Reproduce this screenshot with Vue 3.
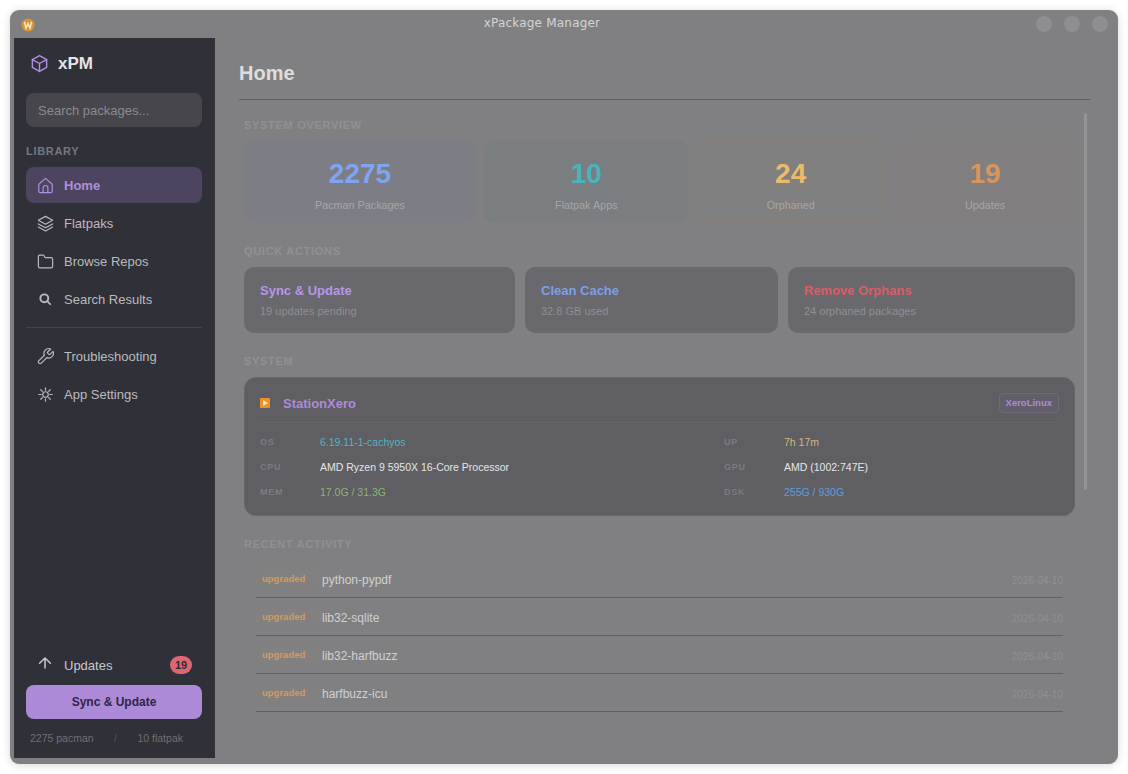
<script setup>
const navTop = [
  { label: 'Home', icon: 'home', active: true },
  { label: 'Flatpaks', icon: 'layers' },
  { label: 'Browse Repos', icon: 'folder' },
  { label: 'Search Results', icon: 'search' },
]
const navBottom = [
  { label: 'Troubleshooting', icon: 'wrench' },
  { label: 'App Settings', icon: 'sun' },
]
const stats = [
  { value: '2275', label: 'Pacman Packages', cls: 'blue', w: 232 },
  { value: '10', label: 'Flatpak Apps', cls: 'teal', w: 204 },
  { value: '24', label: 'Orphaned', cls: 'yellow', w: 188 },
  { value: '19', label: 'Updates', cls: 'orange', w: 184 },
]
const actions = [
  { title: 'Sync & Update', sub: '19 updates pending', cls: 'purple', w: 271 },
  { title: 'Clean Cache', sub: '32.8 GB used', cls: 'blue', w: 253 },
  { title: 'Remove Orphans', sub: '24 orphaned packages', cls: 'red', w: 287 },
]
const specs = [
  { key: 'OS', value: '6.19.11-1-cachyos', cls: 'v-teal' },
  { key: 'UP', value: '7h 17m', cls: 'v-yellow' },
  { key: 'CPU', value: 'AMD Ryzen 9 5950X 16-Core Processor', cls: '' },
  { key: 'GPU', value: 'AMD (1002:747E)', cls: '' },
  { key: 'MEM', value: '17.0G / 31.3G', cls: 'v-green' },
  { key: 'DSK', value: '255G / 930G', cls: 'v-blue' },
]
const activity = ['python-pypdf', 'lib32-sqlite', 'lib32-harfbuzz', 'harfbuzz-icu']
</script>

<template>
  <div class="page">
    <div class="window">
      <header class="titlebar">
        <svg class="wm-logo" width="14" height="14" viewBox="0 0 14 14">
          <circle cx="7" cy="7" r="6.5" fill="#d9962f" />
          <path d="M3.4 3.8 5 10.2 7 5.6 9 10.2 10.6 3.8" fill="none" stroke="#f6e8cc" stroke-width="1.5" />
        </svg>
        <span class="wm-title">xPackage Manager</span>
        <div class="wm-buttons">
          <i></i><i></i><i></i>
        </div>
      </header>

      <div class="body">
        <aside class="sidebar">
          <div class="brand">
            <svg width="19" height="19" viewBox="0 0 24 24" fill="none" stroke="#b08fdc" stroke-width="1.8" stroke-linejoin="round" stroke-linecap="round">
              <path d="M12 2 21 7v10l-9 5-9-5V7z" />
              <path d="M3 7l9 5 9-5M12 12v10" />
            </svg>
            <span>xPM</span>
          </div>
          <div class="search">Search packages...</div>
          <div class="side-label">LIBRARY</div>

          <nav class="nav">
            <a v-for="item in navTop" :key="item.label" class="nav-item" :class="{ active: item.active }">
              <span class="nav-icon">
                <svg width="19" height="19" viewBox="0 0 24 24" fill="none" stroke="currentColor" stroke-width="1.5" stroke-linejoin="round" stroke-linecap="round">
                  <template v-if="item.icon === 'home'">
                    <path d="M3.5 10.5 12 3l8.5 7.5V19a2 2 0 0 1-2 2h-13a2 2 0 0 1-2-2z" />
                    <path d="M9 21v-6a3 3 0 0 1 6 0v6" />
                  </template>
                  <template v-else-if="item.icon === 'layers'">
                    <path d="M12 3 21 8l-9 5-9-5z" />
                    <path d="M3 12.5 12 17.5l9-5" />
                    <path d="M3 16.5 12 21.5l9-5" />
                  </template>
                  <path v-else-if="item.icon === 'folder'" d="M3 6a2 2 0 0 1 2-2h4.5l2 3H19a2 2 0 0 1 2 2v9a2 2 0 0 1-2 2H5a2 2 0 0 1-2-2z" />
                  <template v-else>
                    <circle cx="10.5" cy="10.5" r="5" stroke-width="2.4" />
                    <path d="M14.5 14.5 18 18" stroke-width="2.2" />
                  </template>
                </svg>
              </span>
              {{ item.label }}
            </a>
          </nav>

          <div class="side-sep"></div>

          <nav class="nav">
            <a v-for="item in navBottom" :key="item.label" class="nav-item">
              <span class="nav-icon">
                <svg width="19" height="19" viewBox="0 0 24 24" fill="none" stroke="currentColor" stroke-width="1.5" stroke-linejoin="round" stroke-linecap="round">
                  <path v-if="item.icon === 'wrench'" d="M14.7 6.3a1 1 0 0 0 0 1.4l1.6 1.6a1 1 0 0 0 1.4 0l3.8-3.8a6 6 0 0 1-7.9 7.9l-6.9 6.9a2.1 2.1 0 0 1-3-3l6.9-6.9a6 6 0 0 1 7.9-7.9z" />
                  <template v-else>
                    <circle cx="12" cy="12" r="3.5" />
                    <path d="M12 3.5v3M12 17.5v3M3.5 12h3M17.5 12h3M6 6l2 2M16 16l2 2M6 18l2-2M16 8l2-2" />
                  </template>
                </svg>
              </span>
              {{ item.label }}
            </a>
          </nav>

          <div class="side-foot">
            <a class="nav-item updates">
              <span class="nav-icon">
                <svg width="20" height="20" viewBox="0 0 24 24" fill="none" stroke="currentColor" stroke-width="1.8" stroke-linecap="round" stroke-linejoin="round">
                  <path d="M12 15.6V3.6M5.5 10 12 3.6l6.5 6.4" />
                </svg>
              </span>
              Updates
              <span class="badge">19</span>
            </a>
            <button class="sync">Sync &amp; Update</button>
            <div class="counts">
              <span>2275 pacman</span>
              <span class="slash">/</span>
              <span>10 flatpak</span>
            </div>
          </div>
        </aside>

        <main class="main">
          <h1 class="page-title">Home</h1>
          <div class="content">
            <div class="scrollbar"></div>

            <h2 class="section first">SYSTEM OVERVIEW</h2>
            <div class="stats">
              <div v-for="s in stats" :key="s.label" class="stat" :class="'stat-' + s.cls" :style="{ width: s.w + 'px' }">
                <div class="stat-value">{{ s.value }}</div>
                <div class="stat-label">{{ s.label }}</div>
              </div>
            </div>

            <h2 class="section">QUICK ACTIONS</h2>
            <div class="actions">
              <div v-for="a in actions" :key="a.title" class="action" :style="{ width: a.w + 'px' }">
                <div class="action-title" :class="'t-' + a.cls">{{ a.title }}</div>
                <div class="action-sub">{{ a.sub }}</div>
              </div>
            </div>

            <h2 class="section">SYSTEM</h2>
            <section class="system">
              <div class="system-head">
                <span class="emoji"><b></b></span>
                <span class="host">StationXero</span>
                <span class="distro">XeroLinux</span>
              </div>
              <div class="specs">
                <div v-for="s in specs" :key="s.key" class="spec">
                  <span class="spec-key">{{ s.key }}</span>
                  <span class="spec-val" :class="s.cls">{{ s.value }}</span>
                </div>
              </div>
            </section>

            <h2 class="section recent">RECENT ACTIVITY</h2>
            <div class="activity">
              <div v-for="name in activity" :key="name" class="row">
                <span class="tag">upgraded</span>
                <span class="pkg">{{ name }}</span>
                <span class="date">2026-04-10</span>
              </div>
            </div>
          </div>
        </main>
      </div>
    </div>
  </div>
</template>

<style>
html, body { margin: 0; background: #fff; }
</style>

<style scoped>
.page {
  width: 1128px;
  height: 774px;
  padding: 10px;
  box-sizing: border-box;
  font-family: "Liberation Sans", Arial, sans-serif;
  overflow: hidden;
}
.window {
  width: 1108px;
  height: 754px;
  background: #808082;
  border-radius: 9px;
  box-shadow: 0 1px 8px rgba(0, 0, 0, 0.16);
  padding: 0 4px 6px;
  box-sizing: border-box;
  display: flex;
  flex-direction: column;
}

.titlebar {
  height: 28px;
  flex: none;
  position: relative;
  display: flex;
  align-items: center;
}
.wm-logo { margin: 1px 0 0 7px; }
.wm-title {
  position: absolute;
  left: 0;
  right: 0;
  top: 6px;
  text-align: center;
  font: 12px "DejaVu Sans", sans-serif;
  letter-spacing: 0.2px;
  color: #d4d4d6;
  padding-right: 44px;
}
.wm-buttons {
  margin-left: auto;
  margin-right: 6px;
  display: flex;
  gap: 12px;
}
.wm-buttons i {
  width: 16px;
  height: 16px;
  border-radius: 50%;
  background: #8f8f93;
}

.body { flex: 1; display: flex; min-height: 0; }

.sidebar {
  width: 201px;
  flex: none;
  background: #303039;
  padding: 0 13px 0 12px;
  box-sizing: border-box;
  display: flex;
  flex-direction: column;
}
.brand {
  height: 49px;
  margin-top: 1px;
  padding-left: 4px;
  display: flex;
  align-items: center;
  gap: 9px;
  font-size: 17px;
  font-weight: 700;
  color: #e4e4e6;
}
.search {
  height: 34px;
  margin-top: 5px;
  border-radius: 8px;
  background: #46464c;
  color: #8b8b90;
  font-size: 13px;
  line-height: 35px;
  padding-left: 12px;
}
.side-label {
  margin-top: 18px;
  font-size: 11px;
  font-weight: 700;
  letter-spacing: 0.7px;
  color: #77777e;
  line-height: 13px;
}
.nav { display: flex; flex-direction: column; gap: 2px; }
.side-label + .nav { margin-top: 9px; }
.nav-item {
  height: 36px;
  display: flex;
  align-items: center;
  border-radius: 8px;
  font-size: 13px;
  color: #bbbbbd;
}
.nav-item.active {
  background: #4d4560;
  color: #b08fdc;
  font-weight: 700;
}
.nav-icon {
  width: 20px;
  height: 20px;
  margin: 0 9px;
  display: flex;
  align-items: center;
  justify-content: center;
}
.side-sep {
  height: 1px;
  background: #44444c;
  margin: 10px 0;
}
.side-foot { margin-top: auto; }
.updates { height: 36px; color: #c9c9cb; }
.badge {
  margin-left: auto;
  margin-right: 10px;
  width: 22px;
  height: 18px;
  border-radius: 9px;
  background: #de6670;
  color: #2c2c34;
  font-size: 11px;
  font-weight: 700;
  line-height: 18px;
  text-align: center;
}
.sync {
  display: block;
  width: 100%;
  height: 34px;
  margin-top: 2px;
  border: 0;
  border-radius: 8px;
  background: #ac8ad8;
  color: #2f2546;
  font: 700 12px "Liberation Sans", Arial, sans-serif;
}
.counts {
  height: 39px;
  display: flex;
  align-items: center;
  padding: 0 19px 1px 4px;
  box-sizing: border-box;
  justify-content: space-between;
  font-size: 10.5px;
  color: #6f6f76;
}
.slash { color: #55555c; }

.main {
  flex: 1;
  min-width: 0;
  padding: 0 24px 0 24px;
  display: flex;
  flex-direction: column;
}
.page-title {
  margin: 0;
  height: 62px;
  flex: none;
  line-height: 70px;
  box-sizing: border-box;
  font-size: 20px;
  font-weight: 700;
  color: #dededf;
  border-bottom: 1px solid #5f5f62;
}
.content {
  position: relative;
  padding: 0 15px 0 5px;
}
.scrollbar {
  position: absolute;
  right: 3px;
  top: 13px;
  width: 3px;
  height: 377px;
  background: #949496;
  border-radius: 2px;
}
.section {
  margin: 0;
  font-size: 11px;
  font-weight: 700;
  letter-spacing: 0.7px;
  line-height: 13px;
  color: #909092;
}
.first { margin-top: 19px; }
.stats {
  margin-top: 8px;
  display: flex;
  width: 833px;
  justify-content: space-between;
}
.stat {
  flex: none;
  height: 83px;
  box-sizing: border-box;
  border-radius: 10px;
  border: 1px solid transparent;
  text-align: center;
  padding-top: 17px;
}
.stat-blue { background: #7d7e85; }
.stat-teal { background: #7b7e80; }
.stat-yellow { background: #818080; border-color: #887f79; }
.stat-orange { background: #817f80; border-color: #837f7e; }
.stat-value {
  font-size: 28px;
  font-weight: 700;
  line-height: 32px;
}
.stat-blue .stat-value { color: #80a5f0; }
.stat-teal .stat-value { color: #46b5c0; }
.stat-yellow .stat-value { color: #e8bc6a; }
.stat-orange .stat-value { color: #d9965a; }
.stat-label {
  margin-top: 9px;
  font-size: 10.8px;
  line-height: 13px;
  color: #a5a5a8;
}
.stats + .section { margin-top: 22px; }
.actions {
  margin-top: 9px;
  display: flex;
  gap: 10px;
}
.action {
  flex: none;
  height: 66px;
  box-sizing: border-box;
  border-radius: 10px;
  background: #68686d;
  padding: 16px 16px 0;
}
.action-title {
  font-size: 13px;
  font-weight: 700;
  line-height: 15px;
}
.t-purple { color: #b896e8; }
.t-blue { color: #7e9fe8; }
.t-red { color: #dc5c68; }
.action-sub {
  margin-top: 7px;
  font-size: 11px;
  line-height: 13px;
  color: #8f8f93;
}
.actions + .section { margin-top: 22px; }
.system {
  margin-top: 9px;
  width: 831px;
  height: 139px;
  box-sizing: border-box;
  border-radius: 12px;
  background: #5e5e63;
  border: 1px solid #666669;
  padding: 0 15px;
}
.system-head {
  height: 45px;
  padding-top: 6px;
  box-sizing: border-box;
  display: flex;
  align-items: center;
  border-bottom: 1px solid #656569;
}
.emoji {
  width: 10px;
  height: 10px;
  background: #ee9224;
  border-radius: 1px;
  margin-right: 13px;
  position: relative;
}
.emoji b {
  position: absolute;
  left: 3px;
  top: 2px;
  border-left: 5px solid #f5e3c4;
  border-top: 3px solid transparent;
  border-bottom: 3px solid transparent;
}
.host {
  font-size: 13px;
  font-weight: 700;
  color: #ae8ada;
}
.distro {
  margin-left: auto;
  height: 20px;
  box-sizing: border-box;
  padding: 0 6px;
  border: 1px solid #6f6a7c;
  border-radius: 4px;
  background: #625f6b;
  color: #ad8ad9;
  font-size: 9.5px;
  font-weight: 700;
  line-height: 18px;
}
.specs {
  margin-top: 6px;
  display: grid;
  grid-template-columns: 464px 1fr;
  grid-auto-rows: 25px;
}
.spec { display: flex; align-items: center; }
.spec-key {
  width: 60px;
  flex: none;
  font-size: 9px;
  font-weight: 700;
  letter-spacing: 0.8px;
  color: #7c7c80;
}
.spec-val { font-size: 10.5px; color: #e6e6e8; }
.v-teal { color: #52b4c2; }
.v-yellow { color: #dbb874; }
.v-green { color: #8fb573; }
.v-blue { color: #619fdc; }
.recent { margin-top: 22px; }
.activity { margin: 9px 12px 0; }
.row {
  height: 38px;
  box-sizing: border-box;
  padding-top: 3px;
  border-bottom: 1px solid #616164;
  display: flex;
  align-items: center;
}
.tag {
  width: 66px;
  box-sizing: border-box;
  padding-left: 6px;
  font-size: 9.5px;
  font-weight: 700;
  line-height: 16px;
  color: #d49a5e;
  background: #838080;
  border-radius: 4px;
  margin-top: -2px;
}
.pkg { font-size: 12px; color: #d0d0d2; }
.date { margin-left: auto; font-size: 10px; color: #909092; }
</style>
